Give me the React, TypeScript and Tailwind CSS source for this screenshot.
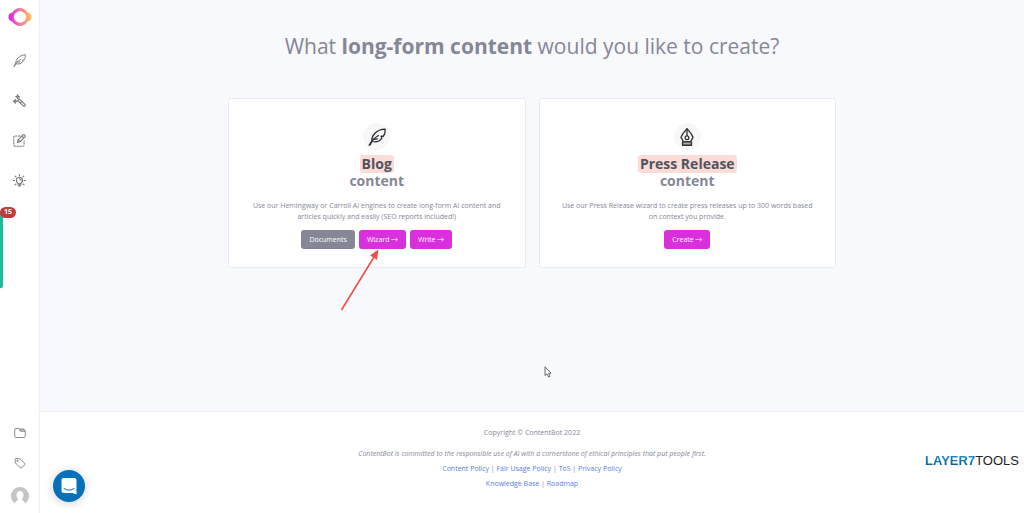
import type { ReactNode } from 'react';

type IconProps = { className?: string };

const links = {
  policies: ['Content Policy', 'Fair Usage Policy', 'ToS', 'Privacy Policy'],
  help: ['Knowledge Base', 'Roadmap'],
};

function Logo() {
  return (
    <svg className="w-6 h-5" viewBox="0 0 24 20" fill="none">
      <defs>
        <linearGradient id="logo" x1="0" y1="10" x2="24" y2="10" gradientUnits="userSpaceOnUse">
          <stop offset="0.1" stopColor="#db2fe0" />
          <stop offset="0.5" stopColor="#f27aa0" />
          <stop offset="1" stopColor="#ffc65c" />
        </linearGradient>
      </defs>
      <path
        fill="url(#logo)"
        fillRule="evenodd"
        d="M12 1C15.400 1 17.800 2.800 19.400 5.200C22 5.800 23.600 7.600 23.600 10C23.600 12.400 22 14.200 19.400 14.800C17.800 17.200 15.400 19 12 19C8.600 19 6.200 17.200 4.600 14.800C2 14.200 .4 12.400 .4 10C.4 7.600 2 5.800 4.600 5.200C6.200 2.800 8.600 1 12 1ZM12 4.300A6.200 5.700 0 1 0 12 15.700A6.200 5.700 0 1 0 12 4.300Z"
      />
    </svg>
  );
}

function FeatherIcon({ className }: IconProps) {
  return (
    <svg className={className} viewBox="0 0 24 24" fill="none" stroke="currentColor" strokeWidth="1.700" strokeLinecap="round" strokeLinejoin="round">
      <path d="M1.500 23C4.500 17.500 8 13.500 14 10" />
      <path d="M5 18C4.500 10 11 2 22.800 1.500C23 5 22.500 8.500 20.500 11L17.500 11L18.500 13.500C15.500 18 11 19.500 5 18Z" />
      <path d="M5 18L3 22.500M8 15L12.500 14.500" />
    </svg>
  );
}

function WandIcon({ className }: IconProps) {
  return (
    <svg className={className} viewBox="0 0 24 24" fill="none" stroke="currentColor" strokeWidth="2" strokeLinecap="round" strokeLinejoin="round">
      <path d="M8.500 12L11.500 9L22 19C23 20 23 21 22 22C21 23 20 23 19 22Z" />
      <path d="M13.500 16.500L16.500 13.500" />
      <path d="M8.500 1.500L9.500 4L12 5L9.500 6L8.500 8.500L7.500 6L5 5L7.500 4Z" />
      <path d="M4 10L5 12.500L7.500 13.500L5 14.500L4 17L3 14.500L1 13.500L3 12.500Z" />
    </svg>
  );
}

function EditIcon({ className }: IconProps) {
  return (
    <svg className={className} viewBox="0 0 24 24" fill="none" stroke="currentColor" strokeWidth="1.900" strokeLinecap="round" strokeLinejoin="round">
      <path strokeDasharray="3 2.500" d="M13 3.500H4Q1.500 3.500 1.500 6V20Q1.500 22.500 4 22.500H18Q20.500 22.500 20.500 20V12" />
      <path d="M9.500 11L18.500 1.500Q20 .5 21.500 2T22.500 5L13 14L8 16Z" />
      <path d="M9.500 11L13 14M16.500 4L20 7.500" />
    </svg>
  );
}

function BulbIcon({ className }: IconProps) {
  return (
    <svg className={className} viewBox="0 0 24 24" fill="none" stroke="currentColor" strokeWidth="2" strokeLinecap="round">
      <path d="M9 18V16.500C4.500 13.500 5.500 6 12 6S19.500 13.500 15 16.500V18Z" />
      <path d="M9.500 20H14.500M11 22H13" strokeWidth="2.400" />
      <path d="M12 1V3M4 4L5.500 5.500M20 4L18.500 5.500M.8 12H3M21 12H23.200M3.500 20L5.500 18.500M20.500 20L18.500 18.500" />
      <path d="M12 9Q15 9 15 12" />
    </svg>
  );
}

function FolderIcon({ className }: IconProps) {
  return (
    <svg className={className} viewBox="0 0 24 24" fill="none" stroke="currentColor" strokeWidth="1.700" strokeLinejoin="round">
      <path d="M1.500 5Q1.500 3 3.500 3H9Q10.500 3 11 4.500L11.500 6H20.500Q22.500 6 22.500 8V19Q22.500 21 20.500 21H3.500Q1.500 21 1.500 19Z" />
      <path d="M11 4H18.500Q20.500 4 21 6M11.500 6L12.500 8.500H22.500" />
    </svg>
  );
}

function TagIcon({ className }: IconProps) {
  return (
    <svg className={className} viewBox="0 0 24 24" fill="none" stroke="currentColor" strokeWidth="1.700" strokeLinejoin="round">
      <path d="M2 4.500Q2 3 3.500 3L11.500 3.500L21.500 12.500Q23 14 21.500 15.500L15.500 21.500Q14 23 12.500 21.500L3 12Z" />
      <circle cx="7" cy="7.500" r="1.300" />
    </svg>
  );
}

function Avatar() {
  return (
    <svg className="size-[18px]" viewBox="0 0 18 18">
      <path
        fill="#c3c3c3"
        fillRule="evenodd"
        d="M4 16.500A9 9 0 1 1 14 16.500C13.800 14.500 12.500 13.800 11.200 13.300V11.500C13.600 9 12.800 4 9 4S4.400 9 6.800 11.500V13.300C5.500 13.800 4.200 14.500 4 16.500Z"
      />
    </svg>
  );
}

function PenNibIcon({ className }: IconProps) {
  return (
    <svg className={className} viewBox="0 0 24 24" fill="none" stroke="currentColor" strokeWidth="1.700" strokeLinejoin="round">
      <path d="M12 1L17.500 7.500L20 12.500L16.500 18.500H7.500L4 12.500L6.500 7.500Z" />
      <path d="M12 1V10.500" />
      <circle cx="12" cy="13" r="2.500" />
      <path d="M6 18.500H18V23H6Z" fill="#aaa" />
    </svg>
  );
}

function NavLink({ label, children }: { label: string; children: ReactNode }) {
  return (
    <a href="#" aria-label={label} className="flex items-center justify-center text-[#777]">
      {children}
    </a>
  );
}

function ActionButton({ label, muted }: { label: string; muted?: boolean }) {
  return (
    <button
      type="button"
      className={`h-[19px] rounded-[3px] px-2 text-[7px] leading-none text-white ${muted ? 'bg-[#858796]' : 'bg-[#da2fdc]'}`}
    >
      {label}
      {!muted && <span className="font-['Noto_Sans_CJK_SC',sans-serif]"> →</span>}
    </button>
  );
}

function ContentCard({ icon, title, text, children }: { icon: ReactNode; title: string; text: string; children: ReactNode }) {
  return (
    <section className="flex flex-1 flex-col items-center rounded-[3px] border border-[#e9ebf4] bg-white px-5 pt-6 pb-[18px] text-center">
      <div className="flex size-[27px] items-center justify-center rounded-full bg-[#f7f7f7] text-[#2c2e33]">{icon}</div>
      <h2 className="mt-[5px] flex flex-col items-center text-[14px] font-bold leading-4">
        <span className="rounded-[3px] bg-[#fddbd7] px-0.5 leading-[18px] text-[#4f5460]">{title}</span>
        <span>content</span>
      </h2>
      <p className="mt-[11px] text-[7px] leading-[11px]">{text}</p>
      <div className="mt-2 flex gap-1">{children}</div>
    </section>
  );
}

function LinkRow({ items }: { items: string[] }) {
  return (
    <p>
      {items.map((item, i) => (
        <span key={item}>
          {i > 0 && ' | '}
          <a href="#" className="text-[#5c7de0]">{item}</a>
        </span>
      ))}
    </p>
  );
}

export default function App() {
  return (
    <div className="flex min-h-screen bg-[#f8f9fd] font-['Open_Sans',sans-serif] text-[#858796]">
      {/* Sidebar */}
      <aside className="relative flex w-10 shrink-0 flex-col items-center justify-between border-r border-[#eceef5] bg-white pt-[7px] pb-2">
        <nav className="flex flex-col items-center gap-[27px]">
          <a href="#" aria-label="Home">
            <Logo />
          </a>
          <NavLink label="Write"><FeatherIcon className="size-[13px]" /></NavLink>
          <NavLink label="Tools"><WandIcon className="size-[13px]" /></NavLink>
          <NavLink label="Editor"><EditIcon className="size-[13px]" /></NavLink>
          <NavLink label="Ideas"><BulbIcon className="size-[13px]" /></NavLink>
        </nav>
        <nav className="flex flex-col items-center gap-[18px]">
          <NavLink label="Projects"><FolderIcon className="size-3" /></NavLink>
          <NavLink label="Pricing"><TagIcon className="size-3" /></NavLink>
          <NavLink label="Account"><Avatar /></NavLink>
        </nav>

        {/* Feedback tab */}
        <div className="absolute left-0 top-[212px] h-19 w-[3px] rounded-r-xs bg-[#1abc9c] shadow-sm" />
        <span className="absolute left-0 top-[207px] flex h-[11px] w-4 items-center justify-center rounded-full bg-[#c13a3a] text-[7px] font-bold text-white">15</span>
      </aside>

      <div className="flex min-w-0 flex-1 flex-col">
        <main className="flex-1 px-4 pt-[31px]">
          <h1 className="text-center text-[21px] leading-[31px]">
            What <strong className="font-bold">long-form content</strong> would you like to create?
          </h1>

          <div className="relative mx-auto mt-9 flex max-w-[608px] gap-[13px]">
            <ContentCard
              icon={<FeatherIcon className="size-[18px]" />}
              title="Blog"
              text="Use our Hemingway or Carroll AI engines to create long-form AI content and articles quickly and easily (SEO reports included!)"
            >
              <ActionButton label="Documents" muted />
              <ActionButton label="Wizard" />
              <ActionButton label="Write" />
            </ContentCard>
            <ContentCard
              icon={<PenNibIcon className="size-[18px]" />}
              title="Press Release"
              text="Use our Press Release wizard to create press releases up to 300 words based on context you provide."
            >
              <ActionButton label="Create" />
            </ContentCard>

            {/* Pointer to the wizard button */}
            <svg className="pointer-events-none absolute left-[112px] top-[151px] h-[62px] w-10" viewBox="0 0 40 62">
              <path d="M1.500 61L34 8" stroke="#f54b4b" strokeWidth="1.600" />
              <path d="M38.500 .5L37 11L33.500 8.500L30 6.500Z" fill="#f54b4b" />
            </svg>
            <svg className="pointer-events-none absolute left-[316px] top-[268px] h-3 w-2" viewBox="0 0 8 12">
              <path d="M1 .8V9.500L3 7.800L4.500 11L6 10.300L4.700 7.200H7Z" fill="#fff" stroke="#55565e" strokeWidth="0.900" />
            </svg>
          </div>
        </main>

        <footer className="relative border-t border-[#eceef5] bg-white pt-4 pb-6 text-center text-[7px] leading-[10px]">
          <p>Copyright © ContentBot 2022</p>
          <p className="mt-[11px] italic">
            ContentBot is committed to the responsible use of AI with a cornerstone of ethical principles that put people first.
          </p>
          <div className="mt-[5px] flex flex-col gap-[5px]">
            <LinkRow items={links.policies} />
            <LinkRow items={links.help} />
          </div>

          <div className="absolute right-[5px] top-[41px] font-['Liberation_Sans',sans-serif] text-[13px] leading-4 text-[#222]">
            <span className="bg-linear-to-b from-[#2299dd] to-[#07527f] bg-clip-text font-bold text-transparent">LAYER7</span>TOOLS
          </div>
        </footer>
      </div>

      {/* Chat launcher */}
      <button
        type="button"
        aria-label="Open chat"
        className="fixed bottom-[11px] left-[53px] flex size-8 items-center justify-center rounded-full bg-[#0671b8] shadow-[0_1px_10px_rgba(0,0,0,0.2)]"
      >
        <svg className="size-[18px]" viewBox="0 0 18 18" fill="none">
          <path d="M3.500 1H14.500Q16.500 1 16.500 3V17.500L12.500 16H3.500Q1.500 16 1.500 14V3Q1.500 1 3.500 1Z" fill="#fff" />
          <path d="M4 11.500Q9 15 14 11.500" stroke="#0671b8" strokeLinecap="round" />
        </svg>
      </button>
    </div>
  );
}
